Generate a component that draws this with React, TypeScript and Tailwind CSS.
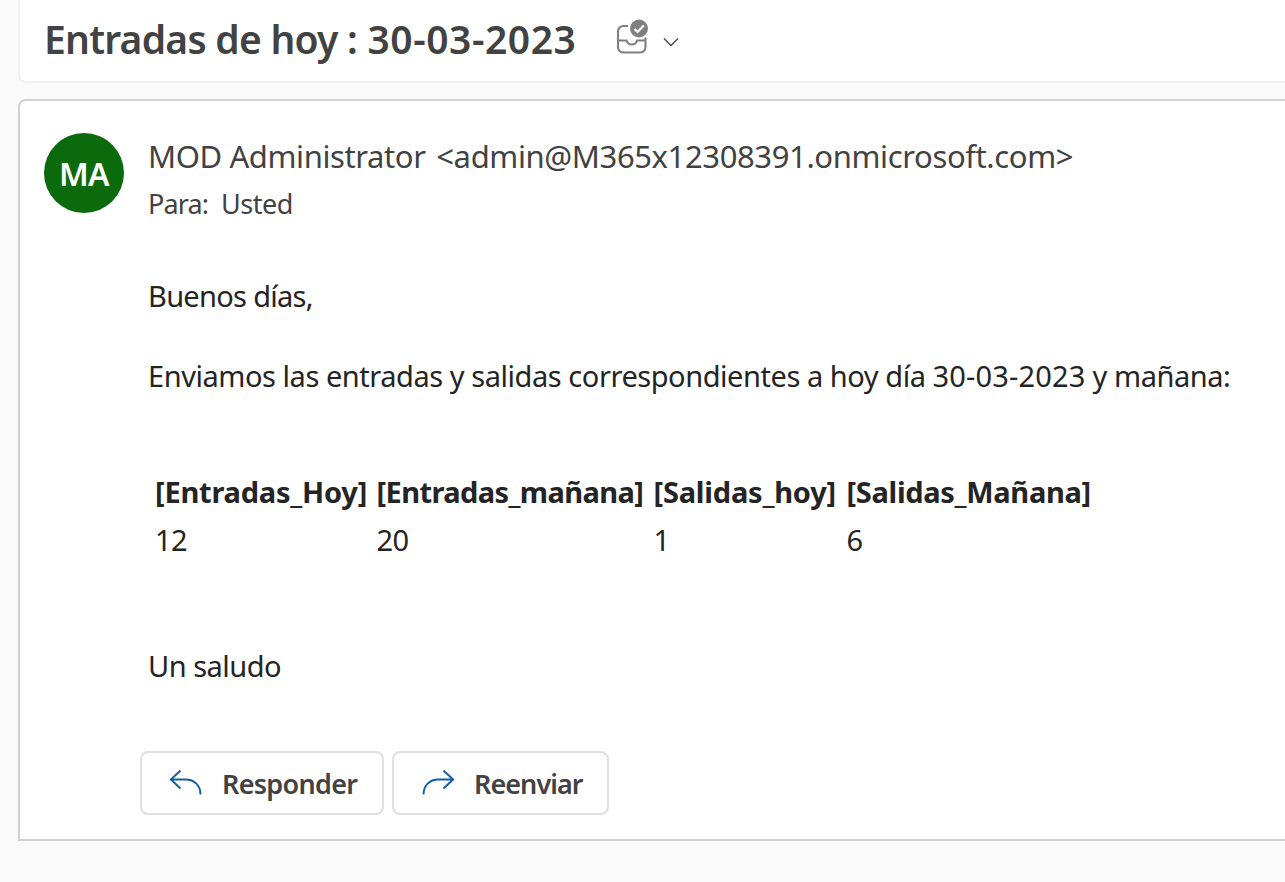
const columns = [
  { title: '[Entradas_Hoy]', value: '12', cell: 'w-[221.5px]', spacing: 'tracking-[-0.22px]' },
  { title: '[Entradas_mañana]', value: '20', cell: 'w-[277px]', spacing: 'tracking-[-0.6px]' },
  { title: '[Salidas_hoy]', value: '1', cell: 'w-[193px]', spacing: 'tracking-[-0.2px]' },
  { title: '[Salidas_Mañana]', value: '6', cell: 'w-[250px]', spacing: 'tracking-[-0.3px]' },
];

function InboxCheckIcon() {
  return (
    <svg className="h-9 w-9 shrink-0" viewBox="0 0 36 36" fill="none">
      <path
        d="M14 8H9.5A5.5 5.5 0 0 0 4 13.5V29a5.500 5.500 0 0 0 5.500 5.500H26A5.500 5.500 0 0 0 31.500 29V19.500M4 22.500H12.500C13.300 25 15 26.500 17.800 26.500S22.300 25 23 22.500H31.500"
        stroke="#808080"
        strokeWidth="2.1"
      />
      <circle cx="25" cy="10.500" r="9" fill="#808080" />
      <path d="m20.500 11 3 3 6.300-6.500" stroke="#fff" strokeWidth="2.2" />
    </svg>
  );
}

function ReplyIcon() {
  return (
    <svg className="h-8 w-8 shrink-0" viewBox="0 0 32 32" fill="none" stroke="#115ea3" strokeWidth="1.9">
      <path d="M10.500 3.500.900 12.500l9.600 9M1 12.500H15.500C24.500 12.500 30.500 18.500 30.500 27.500" />
    </svg>
  );
}

function ForwardIcon() {
  return (
    <svg className="h-8 w-8 shrink-0 -scale-x-100" viewBox="0 0 32 32" fill="none" stroke="#115ea3" strokeWidth="1.9">
      <path d="M10.500 3.500.900 12.500l9.600 9M1 12.500H15.500C24.500 12.500 30.500 18.500 30.500 27.500" />
    </svg>
  );
}

export default function App() {
  return (
    <main className="h-[882px] w-full overflow-hidden bg-[#fafafa] pl-[18px] font-['Noto_Sans',sans-serif] whitespace-nowrap text-[#242424]">
      <header className="flex h-[83px] items-start rounded-bl-lg border-b-2 border-l-2 border-[#f0f0f0] bg-white pl-6 text-[#424242]">
        <h1 className="mt-3 w-[570px] text-[39px] leading-[54px] font-semibold tracking-[-0.75px]">
          Entradas de hoy : <span className="ml-px tracking-[0.55px]">30-03-2023</span>
        </h1>
        <div className="mt-[18px] flex items-center">
          <InboxCheckIcon />
          <svg className="mt-3 ml-[13px] h-4 w-4" viewBox="0 0 16 16" fill="none" stroke="#424242" strokeWidth="1.3">
            <path d="m1 4.500 7 7 7-7" />
          </svg>
        </div>
      </header>

      <article className="mt-4 flex h-[742px] flex-col rounded-tl-lg border-t-2 border-b-2 border-l-2 border-[#d1d1d1] bg-white pl-6">
        <div className="mt-8 flex h-20 gap-6">
          <div className="flex size-20 items-center justify-center rounded-full bg-[#0b6a0b] pt-0.5 text-[32px] font-semibold tracking-[-0.5px] text-white">
            MA
          </div>
          <div className="text-[#424242]">
            <p className="mt-px text-[31px] leading-[44px] tracking-[-0.4px]">
              MOD Administrator <span className="ml-[3px] tracking-[-0.38px]">&lt;admin@M365x12308391.onmicrosoft.com&gt;</span>
            </p>
            <p className="mt-[6px] flex text-[27px] leading-10">
              <span className="w-[73px] tracking-[-0.9px]">Para:</span>
              <span className="tracking-[-0.5px]">Usted</span>
            </p>
          </div>
        </div>

        <div className="mt-[63px] pl-[104px] text-[29px] leading-10">
          <p className="tracking-[-0.7px]">Buenos días,</p>
          <p className="mt-10 tracking-[-0.45px]">
            Enviamos las entradas y salidas correspondientes a hoy día{' '}
            <span className="tracking-[0.15px]">30-03-2023</span> y mañana:
          </p>
          <table className="mt-[72px] ml-[7px] table-fixed border-collapse text-left">
            <thead>
              <tr>
                {columns.map((c) => (
                  <th key={c.title} className={`h-12 p-0 font-bold ${c.cell} ${c.spacing}`}>
                    {c.title}
                  </th>
                ))}
              </tr>
            </thead>
            <tbody>
              <tr>
                {columns.map((c) => (
                  <td key={c.title} className="h-12 p-0 tracking-[-0.7px]">
                    {c.value}
                  </td>
                ))}
              </tr>
            </tbody>
          </table>
          <p className="mt-[82px] tracking-[-0.5px]">Un saludo</p>
        </div>

        <div className="mt-[65px] flex gap-2 pl-24 text-[27px] font-semibold text-[#424242]">
          <button className="flex h-16 w-[244px] items-center rounded-lg border-2 border-[#e0e0e0] pl-7">
            <ReplyIcon />
            <span className="mt-0.5 ml-5 tracking-[-0.7px]">Responder</span>
          </button>
          <button className="flex h-16 w-[217px] items-center rounded-lg border-2 border-[#e0e0e0] pl-7">
            <ForwardIcon />
            <span className="mt-0.5 ml-5 tracking-[-0.95px]">Reenviar</span>
          </button>
        </div>
      </article>
    </main>
  );
}
